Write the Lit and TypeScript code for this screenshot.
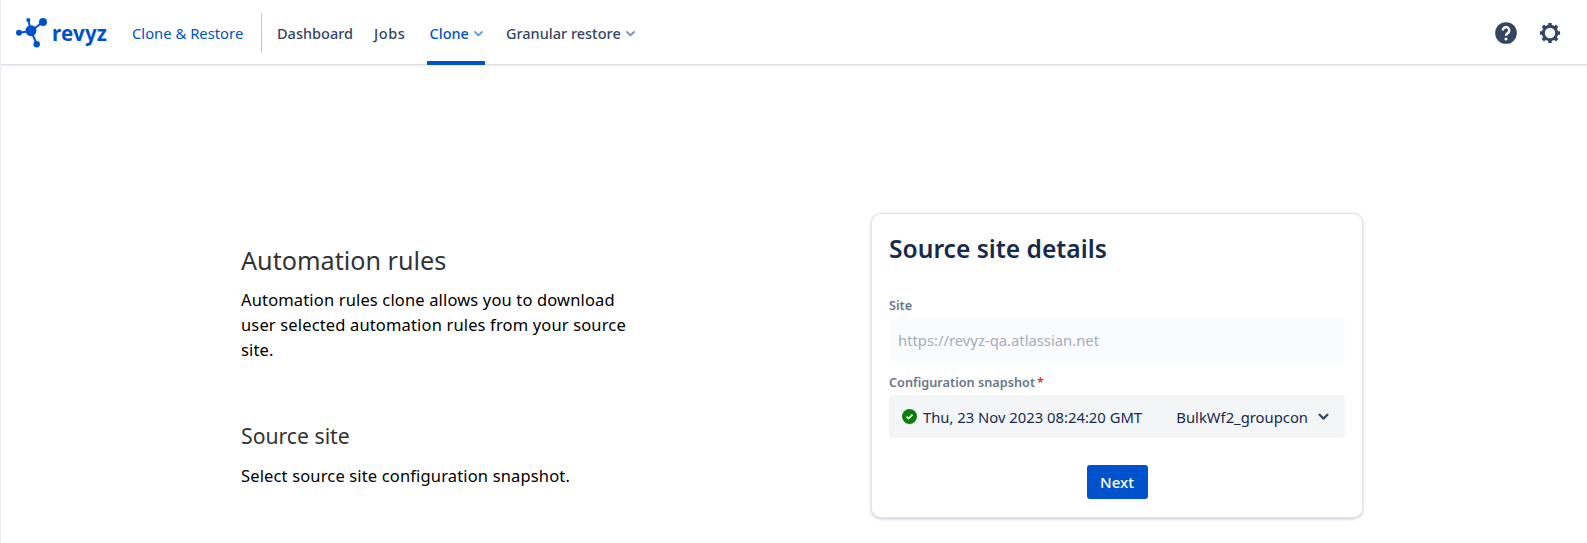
import { LitElement, html, css, svg } from "lit";
import { customElement } from "lit/decorators.js";

const chevron = svg`<path d="M6.5 9.5l5.5 5.5 5.5-5.5" fill="none" stroke="currentColor" stroke-width="3.2" stroke-linecap="round" stroke-linejoin="round"/>`;

@customElement("app-root")
export class AppRoot extends LitElement {
  static styles = css`
    :host { display: block; height: 543px; overflow: hidden; background: #fff; font-family: "Noto Sans", sans-serif; border-left: 1px solid #ebecf0; box-sizing: border-box; }
    .nav { height: 65px; box-sizing: border-box; display: flex; align-items: center; padding: 2px 24px 0 15px; border-bottom: 1px solid #dfe1e6; box-shadow: 0 1px 2px rgba(9,30,66,.1); }
    .logo { display: flex; align-items: center; color: #0052cc; width: 116px; flex: none; }
    .logo svg { width: 36px; height: 36px; flex: none; }
    .logo span { font-weight: 700; font-size: 20.5px; letter-spacing: .2px; }
    .product { color: #0052cc; font-size: 14.8px; width: 129px; flex: none; }
    .sep { width: 1px; height: 40px; background: #c1c7d0; flex: none; }
    .items { display: flex; align-self: stretch; margin-left: 5px; gap: 21px; }
    .item { position: relative; display: flex; align-items: center; padding: 0 0 0 10px; font-size: 14.5px; font-weight: 500; color: #344563; }
    .item + .item { padding-left: 0; }
    .item.jobs { letter-spacing: .6px; }
    .item svg { width: 15px; height: 15px; margin: 0 -3px 0 2px; color: #8993a4; }
    .item.active { color: #0052cc; padding: 0 2px 0 3px; }
    .item.active svg { color: #6b9be0; }
    .item.active::after { content: ""; position: absolute; left: 0; right: 0; bottom: -1px; height: 4px; background: #0052cc; }
    .right { margin-left: auto; display: flex; align-items: center; gap: 18px; color: #344563; }
    .right svg { width: 26px; height: 26px; display: block; }
    .main { display: flex; padding: 148px 0 0 240px; }
    .left { width: 630px; flex: none; padding-top: 31px; }
    h1 { margin: 0; font-size: 25.2px; font-weight: 400; color: #333; line-height: 32px; }
    h2 { margin: 60px 0 0; font-size: 21.2px; font-weight: 400; color: #333; line-height: 28px; }
    p { margin: 0; font-size: 16.5px; letter-spacing: .15px; line-height: 25px; color: #000; max-width: 395px; }
    h1 + p { margin-top: 11px; }
    h2 + p { margin-top: 13px; }
    .card { width: 492px; height: 305px; box-sizing: border-box; border: 1px solid #e4e6ea; border-radius: 10px; padding: 17px; box-shadow: 0 1px 3px rgba(9,30,66,.25); background: #fff; }
    .card h3 { margin: 0; font-size: 24.6px; font-weight: 600; line-height: 36px; color: #172b4d; }
    .label { font-size: 12.7px; font-weight: 600; color: #6b778c; line-height: 16px; }
    .label.site { margin-top: 30px; }
    .label.cfg { margin-top: 13px; }
    .req { color: #de350b; margin-left: 2px; }
    .field { height: 43px; margin-top: 5px; border-radius: 4px; display: flex; align-items: center; font-size: 14.8px; color: #172b4d; }
    .field.dis { background: #fafbfc; color: #a5adba; padding-left: 9px; }
    .field.sel { background: #f4f5f7; padding: 0 13px; }
    .check { width: 15px; height: 15px; flex: none; margin: -1px 6px 0 0; }
    .name { margin-left: auto; }
    .caret { width: 17px; height: 17px; margin-left: 7px; color: #344563; flex: none; }
    .actions { display: flex; justify-content: center; margin-top: 27px; }
    button { font: inherit; font-size: 15px; font-weight: 500; width: 61px; height: 34px; border: 0; border-radius: 3px; background: #0052cc; color: #fff; padding: 0; }
  `;

  render() {
    return html`
      <div class="nav">
        <div class="logo">
          <svg viewBox="0 0 36 36" aria-hidden="true">
            <g stroke="currentColor" stroke-width="2" fill="none">
              <path d="M15 16L27 7M15 16L12.3 5M15 16L20.7 29M15 16L3 17.7"/>
            </g>
            <g fill="currentColor">
              <circle cx="15" cy="15.7" r="5.5"/><circle cx="27" cy="7" r="4"/><circle cx="12.3" cy="5" r="2"/><circle cx="20.7" cy="29.3" r="3.2"/><circle cx="3" cy="17.7" r="3"/>
            </g>
          </svg>
          <span>revyz</span>
        </div>
        <div class="product">Clone &amp; Restore</div>
        <div class="sep"></div>
        <div class="items">
          <div class="item">Dashboard</div>
          <div class="item jobs">Jobs</div>
          <div class="item active">Clone<svg viewBox="0 0 24 24">${chevron}</svg></div>
          <div class="item">Granular restore<svg viewBox="0 0 24 24">${chevron}</svg></div>
        </div>
        <div class="right">
          <svg viewBox="0 0 24 24"><circle cx="12" cy="12" r="10" fill="currentColor"/><path d="M9 9.6a3 3 0 1 1 4.6 2.5c-1 .7-1.6 1.2-1.6 2.4" fill="none" stroke="#fff" stroke-width="2.3"/><circle cx="12" cy="17.6" r="1.4" fill="#fff"/></svg>
          <svg viewBox="0 0 24 24"><circle cx="12" cy="12" r="6.2" fill="none" stroke="currentColor" stroke-width="2.8"/><g stroke="currentColor" stroke-width="3.2"><path d="M12 2.7v3M12 18.3v3M2.7 12h3M18.3 12h3M5.4 5.4l2.2 2.2M16.4 16.4l2.2 2.2M5.4 18.6l2.2-2.2M16.4 7.6l2.2-2.2"/></g></svg>
        </div>
      </div>
      <div class="main">
        <div class="left">
          <h1>Automation rules</h1>
          <p>Automation rules clone allows you to download user selected automation rules from your source site.</p>
          <h2>Source site</h2>
          <p>Select source site configuration snapshot.</p>
        </div>
        <div class="card">
          <h3>Source site details</h3>
          <div class="label site">Site</div>
          <div class="field dis">https://revyz-qa.atlassian.net</div>
          <div class="label cfg">Configuration snapshot<span class="req">*</span></div>
          <div class="field sel">
            <svg class="check" viewBox="0 0 16 16"><circle cx="8" cy="8" r="8" fill="#0a7d0a"/><path d="M4.8 8.2l2.2 2.1 4.2-4.2" fill="none" stroke="#fff" stroke-width="1.8"/></svg>
            <span>Thu, 23 Nov 2023 08:24:20 GMT</span>
            <span class="name">BulkWf2_groupcon</span>
            <svg class="caret" viewBox="0 0 24 24">${chevron}</svg>
          </div>
          <div class="actions"><button>Next</button></div>
        </div>
      </div>
    `;
  }
}
